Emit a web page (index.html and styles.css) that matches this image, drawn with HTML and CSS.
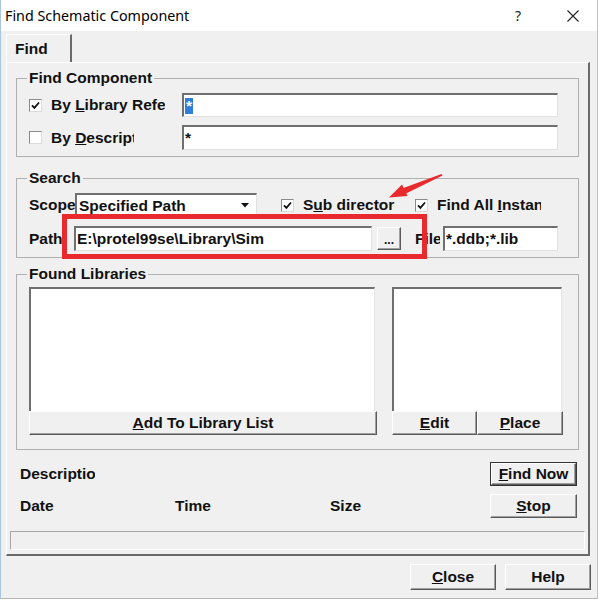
FILE: index.html
```html
<!DOCTYPE html>
<html lang="en">
<head>
  <meta charset="UTF-8" />
  <meta name="viewport" content="width=device-width, initial-scale=1.0"/>
  <title>Find Schematic Component</title>
  <link rel="stylesheet" href="styles.css">
</head>
<body>
  <div class="window">
    <div class="titlebar">
      <span class="title">Find Schematic Component</span>
      <span class="help">?</span>
      <svg class="xbtn" width="14" height="14" viewBox="0 0 14 14"><path d="M1.5 1.5L12.5 12.5M12.5 1.5L1.5 12.5" stroke="#222" stroke-width="1.1"/></svg>
    </div>

    <div class="client">
      <div class="tabs"><div class="tab">Find</div></div>

      <div class="panel">
        <fieldset class="group comp">
          <legend>Find Component</legend>
          <div class="row">
            <div class="pick">
              <span class="check"><svg width="9" height="9" viewBox="0 0 9 9"><path d="M1 4.3L3.4 6.8L8 1.5" fill="none" stroke="#111" stroke-width="1.8"/></svg></span>
              <span class="lbl" style="width:114px">By <u>L</u>ibrary Reference</span>
            </div>
            <div class="edit w376"><span class="sel">*</span></div>
          </div>
          <div class="row r2">
            <div class="pick">
              <span class="check"></span>
              <span class="lbl" style="width:83px">By <u>D</u>escription</span>
            </div>
            <div class="edit w376 h25">*</div>
          </div>
        </fieldset>

        <fieldset class="group search">
          <legend>Search</legend>
          <div class="row">
            <span class="lbl" style="width:46px">Scope</span>
            <div class="edit combo">Specified Path
              <svg class="drop" width="8" height="5" viewBox="0 0 8 5"><path d="M0 0H8L4 4.5Z" fill="#111"/></svg>
            </div>
            <span class="check gap24"><svg width="9" height="9" viewBox="0 0 9 9"><path d="M1 4.3L3.4 6.8L8 1.5" fill="none" stroke="#111" stroke-width="1.8"/></svg></span>
            <span class="lbl" style="width:92px">S<u>u</u>b directories</span>
            <span class="check gap20"><svg width="9" height="9" viewBox="0 0 9 9"><path d="M1 4.3L3.4 6.8L8 1.5" fill="none" stroke="#111" stroke-width="1.8"/></svg></span>
            <span class="lbl" style="width:104px">Find All <u>I</u>nstances</span>
          </div>
          <div class="row r2b">
            <span class="lbl plain" style="width:45px">Path</span>
            <div class="edit h25 w298">E:\protel99se\Library\Sim</div>
            <button class="btn dots">...</button>
            <span class="lbl plain fil" style="width:25px">File</span>
            <div class="edit h25 w115">*.ddb;*.lib</div>
          </div>
        </fieldset>

        <fieldset class="group found">
          <legend>Found Libraries</legend>
          <div class="cols">
            <div class="col left">
              <div class="list"></div>
              <button class="btn wide"><u>A</u>dd To Library List</button>
            </div>
            <div class="col right">
              <div class="list"></div>
              <div class="pair">
                <button class="btn"><u>E</u>dit</button>
                <button class="btn"><u>P</u>lace</button>
              </div>
            </div>
          </div>
        </fieldset>

        <div class="info">
          <span class="lbl plain" style="width:75px">Description</span>
          <button class="btn default"><u>F</u>ind Now</button>
        </div>
        <div class="info r2">
          <span class="cell">Date</span>
          <span class="cell">Time</span>
          <span class="cell">Size</span>
          <button class="btn stop"><u>S</u>top</button>
        </div>
        <div class="status"></div>
      </div>

      <div class="footer">
        <button class="btn big"><u>C</u>lose</button>
        <button class="btn big">Help</button>
      </div>
    </div>

    <svg class="marks" width="600" height="600" viewBox="0 0 600 600">
      <rect x="64.5" y="216.5" width="360" height="40" fill="none" stroke="#e8292e" stroke-width="5"/>
      <polygon points="389,197.5 402,184.5 407.5,196" fill="#e8292e"/>
      <polygon points="402,188.5 405,194 442.5,175.5 441.5,174" fill="#e8292e"/>
    </svg>
  </div>
</body>
</html>
```

FILE: styles.css
```css
*, *::before, *::after { box-sizing: border-box; }

body {
  margin: 0;
  background: #fff;
}

.window {
  position: relative;
  width: 598px;
  height: 599px;
  border-left: 1px solid #a9c6e4;
  border-right: 1px solid #a9c6e4;
  border-bottom: 1px solid #b5b5b5;
  background: #f0f0f0;
  font-family: "Liberation Sans", Arial, sans-serif;
  font-weight: bold;
  font-size: 15.5px;
  color: #111;
}

.titlebar {
  display: flex;
  align-items: center;
  height: 31px;
  background: #fff;
  padding-left: 4px;
  font-family: "Noto Sans", sans-serif;
  font-weight: normal;
  font-size: 14.3px;
  color: #000;
}

.title { flex: 1; }
.help { margin-right: 45px; font-size: 14px; color: #222; }
.xbtn { margin-right: 17px; }

.tabs {
  padding: 3px 0 0 5px;
  display: flex;
}

.tab {
  width: 66px;
  height: 28px;
  padding-left: 8px;
  line-height: 28px;
  border-left: 1px solid #fff;
  border-top: 1px solid #fff;
  border-right: 2px solid #6a6a6a;
}

.panel {
  margin: 0 7px 0 5px;
  border-top: 1px solid #fff;
  border-left: 1px solid #fff;
  border-right: 2px solid #6a6a6a;
  border-bottom: 2px solid #6a6a6a;
  padding-bottom: 4px;
}

.group {
  margin: 0 9px 0 9px;
  padding: 6px 12px 6px 12px;
  border: 1px solid #b0b0b0;
  min-width: 0;
}

.group legend {
  padding: 0 2px;
  margin-left: -2px;
  line-height: 18px;
}

.comp { margin-top: 6px; }
.search { margin-top: 12px; }
.found { margin-top: 7px; padding-top: 4px; padding-bottom: 14px; }

.row {
  display: flex;
  align-items: center;
  height: 24px;
}

.comp .r2 { margin-top: 8px; height: 25px; }
.search .r2b { margin-top: 9px; height: 25px; }

.pick {
  width: 153px;
  display: flex;
  align-items: center;
}

.check {
  width: 13px;
  height: 13px;
  flex: none;
  margin-right: 9px;
  display: flex;
  align-items: center;
  justify-content: center;
  background: #fff;
  border: 1px solid;
  border-color: #8a8a8a #dadada #dadada #8a8a8a;
}

.gap24 { margin-left: 24px; }
.gap20 { margin-left: 20px; }

.lbl {
  flex: none;
  white-space: nowrap;
  overflow: hidden;
}

.fil { margin-left: 14px; }

.edit {
  display: flex;
  align-items: center;
  height: 24px;
  padding-left: 1px;
  background: #fff;
  border-top: 2px solid #707070;
  border-left: 2px solid #707070;
  border-right: 1px solid #e2e2e2;
  border-bottom: 1px solid #e2e2e2;
  white-space: nowrap;
  overflow: hidden;
}

.h25 { height: 25px; }
.w376 { width: 376px; }
.w298 { width: 298px; }
.w115 { width: 115px; margin-left: 3px; }

.sel {
  background: #2f7fd8;
  color: #fff;
  line-height: 16px;
  padding: 0 1px;
}

.combo {
  width: 182px;
  padding-left: 2px;
}

.drop { margin-left: auto; margin-right: 7px; }

.btn {
  font: inherit;
  color: #111;
  background: #f0f0f0;
  border: 1px solid;
  border-color: #fff #5a5a5a #5a5a5a #fff;
  box-shadow: inset -1px -1px 0 #a0a0a0;
  padding: 0;
  height: 24px;
  cursor: pointer;
}

.dots {
  width: 24px;
  height: 23px;
  margin-left: 5px;
  font-size: 12px;
  line-height: 16px;
  padding-top: 3px;
}

.cols {
  display: flex;
  gap: 15px;
}

.col { display: flex; flex-direction: column; }
.left { width: 348px; }
.right { width: 171px; }

.list {
  height: 124px;
  background: #fff;
  border-top: 2px solid #707070;
  border-left: 2px solid #707070;
  border-right: 1px solid #e6e6e6;
  margin-right: 2px;
}

.right .list { margin-right: 1px; }

.wide { width: 348px; }

.pair { display: flex; }
.pair .btn { width: 85px; }
.pair .btn:last-child { width: 86px; }

.info {
  display: flex;
  align-items: center;
  height: 24px;
  margin-top: 12px;
  padding: 0 11px 0 13px;
}

.info.r2 { margin-top: 8px; }

.cell { width: 155px; }

.info .btn {
  margin-left: auto;
  width: 87px;
}

.default {
  outline: 1px solid #333;
  outline-offset: -1px;
  border-width: 2px;
}

.status {
  height: 19px;
  margin: 13px 3px 0 3px;
  border: 1px solid;
  border-color: #a6a6a6 #fff #fff #a6a6a6;
}

.footer {
  display: flex;
  justify-content: flex-end;
  gap: 9px;
  padding: 8px 6px 0 0;
}

.big {
  width: 86px;
  height: 26px;
}

.marks {
  position: absolute;
  left: -1px;
  top: 0;
  pointer-events: none;
}
```
